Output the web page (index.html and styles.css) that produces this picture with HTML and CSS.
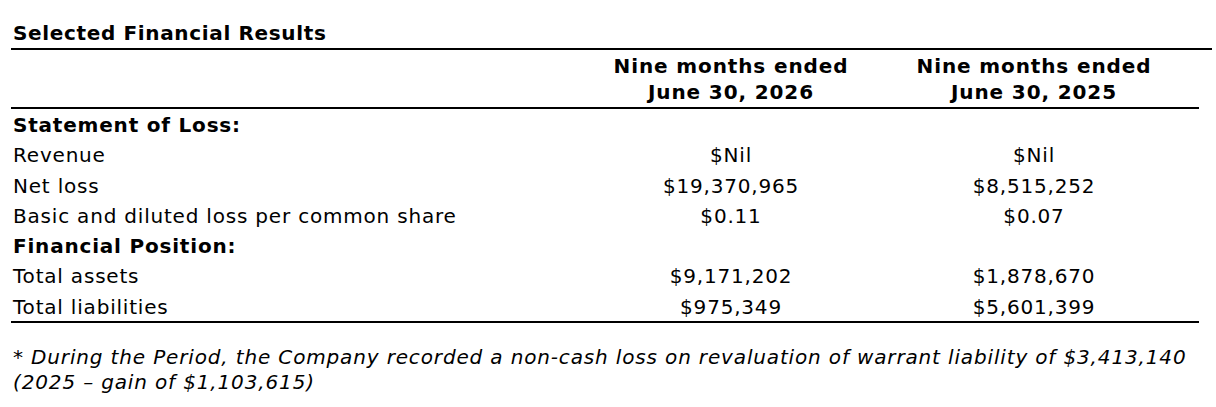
FILE: index.html
```html
<!DOCTYPE html>
<html lang="en">
<head>
<meta charset="utf-8">
<title>Selected Financial Results</title>
<link rel="stylesheet" href="styles.css">
</head>
<body>
<div class="report">
  <h2 class="title">Selected Financial Results</h2>
  <div class="table">
    <div class="head">
      <div class="cell label"></div>
      <div class="cell num">Nine months ended<br>June 30, 2026</div>
      <div class="cell num">Nine months ended<br>June 30, 2025</div>
      <div class="cell pad"></div>
    </div>
    <div class="row section">
      <div class="cell label">Statement of Loss:</div>
      <div class="cell num"></div>
      <div class="cell num"></div>
      <div class="cell pad"></div>
    </div>
    <div class="row">
      <div class="cell label">Revenue</div>
      <div class="cell num">$Nil</div>
      <div class="cell num">$Nil</div>
      <div class="cell pad"></div>
    </div>
    <div class="row">
      <div class="cell label">Net loss</div>
      <div class="cell num">$19,370,965</div>
      <div class="cell num">$8,515,252</div>
      <div class="cell pad"></div>
    </div>
    <div class="row">
      <div class="cell label">Basic and diluted loss per common share</div>
      <div class="cell num">$0.11</div>
      <div class="cell num">$0.07</div>
      <div class="cell pad"></div>
    </div>
    <div class="row section">
      <div class="cell label">Financial Position:</div>
      <div class="cell num"></div>
      <div class="cell num"></div>
      <div class="cell pad"></div>
    </div>
    <div class="row">
      <div class="cell label">Total assets</div>
      <div class="cell num">$9,171,202</div>
      <div class="cell num">$1,878,670</div>
      <div class="cell pad"></div>
    </div>
    <div class="row last">
      <div class="cell label">Total liabilities</div>
      <div class="cell num">$975,349</div>
      <div class="cell num">$5,601,399</div>
      <div class="cell pad"></div>
    </div>
  </div>
  <p class="note">* During the Period, the Company recorded a non-cash loss on revaluation of warrant liability of $3,413,140<br>(2025 – gain of $1,103,615)</p>
</div>
</body>
</html>
```

FILE: styles.css
```css
html, body {
  margin: 0;
  padding: 0;
  background: #ffffff;
}

body {
  font-family: "DejaVu Sans", Verdana, sans-serif;
  font-size: 20px;
  color: #000000;
  letter-spacing: 0.8px;
}

.report {
  padding: 21px 4px 0 11px;
}

.title {
  margin: 0;
  font-size: 20px;
  font-weight: bold;
  letter-spacing: 0.65px;
  line-height: 24px;
  padding: 0 0 3px 2px;
  border-bottom: 2px solid #000;
}

.table {
  width: 1188px;
}

.head,
.row {
  display: grid;
  grid-template-columns: 569px 302px 304px 1fr;
}

.head {
  padding: 3px 0 0;
  line-height: 26px;
  height: 59px;
  box-sizing: border-box;
  font-weight: bold;
  letter-spacing: 0.88px;
  border-bottom: 2px solid #000;
}

.row {
  height: 30.27px;
  box-sizing: border-box;
  padding-top: 3px;
  line-height: 26px;
}

.row.last {
  border-bottom: 2px solid #000;
  height: 32.27px;
}

.section {
  font-weight: bold;
}

.cell {
  white-space: nowrap;
}

.label {
  padding-left: 2px;
}

.num {
  text-align: center;
}

.note {
  margin: 22px 0 0 2px;
  font-style: italic;
  letter-spacing: 0.85px;
  line-height: 25px;
}
```
